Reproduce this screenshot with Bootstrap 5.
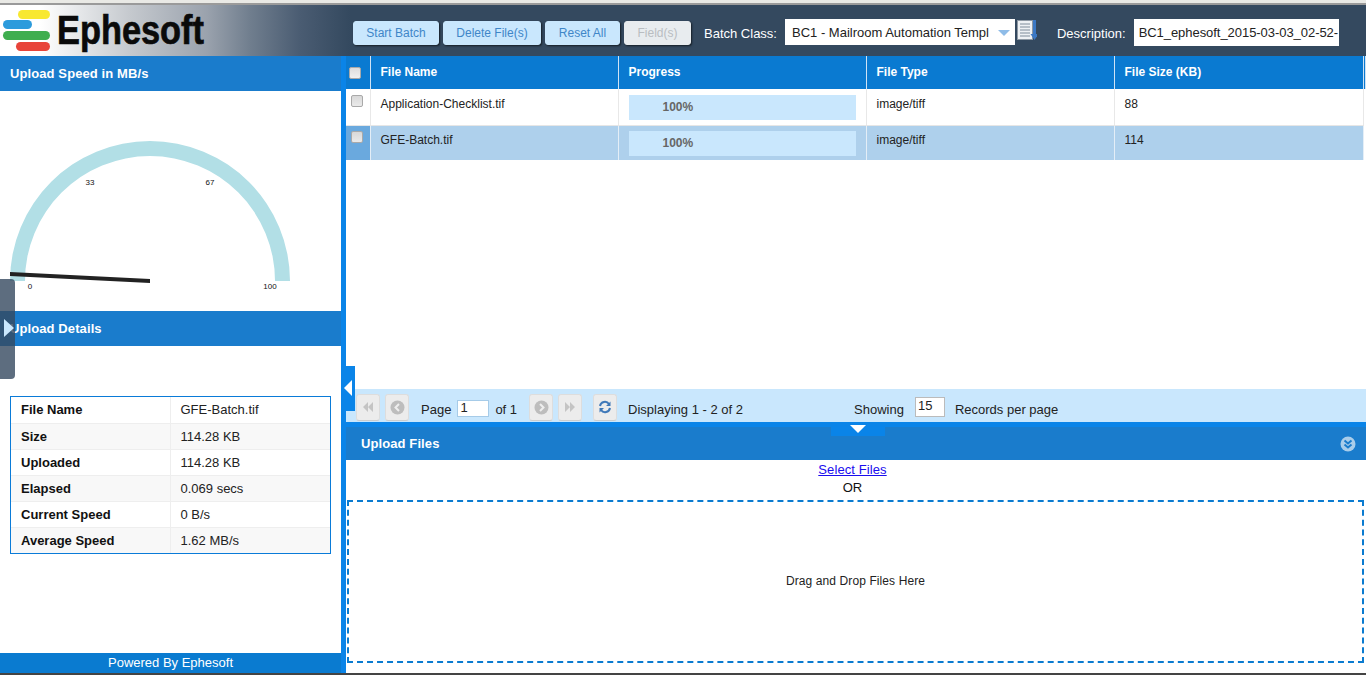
<!DOCTYPE html>
<html lang="en">
<head>
<meta charset="utf-8">
<title>Ephesoft Web Scanner</title>
<link href="https://cdn.jsdelivr.net/npm/bootstrap@5.3.0/dist/css/bootstrap.min.css" rel="stylesheet">
<style>
html,body{height:675px;overflow:hidden}
body{font-family:"Liberation Sans",Arial,sans-serif;font-size:12px;color:#111;background:#fff}
.shell{height:675px;position:relative}
.top-strip{height:5px;background:#e9e9e5;border-bottom:2px solid #9a9a9a}
.app-head{height:51px;background:linear-gradient(90deg,#fff 0,#fff 40px,#c5c9ce 130px,#9aa2ad 207px,#707e8e 250px,#4a5c72 300px,#34495f 350px)}
.logo-box{width:353px;flex:none}
.act-btn{--bs-btn-padding-y:0;--bs-btn-padding-x:0;--bs-btn-font-size:12px;--bs-btn-color:#3f86c8;--bs-btn-bg:#c9e7fd;--bs-btn-border-color:#c9e7fd;--bs-btn-hover-color:#3f86c8;--bs-btn-hover-bg:#c9e7fd;--bs-btn-border-radius:3px;--bs-btn-line-height:23px;--bs-btn-disabled-color:#b9bdc1;--bs-btn-disabled-bg:#e8ecef;--bs-btn-disabled-border-color:#e8ecef;--bs-btn-disabled-opacity:1;height:24px;box-shadow:1px 1px 2px rgba(0,0,0,.6)}
.act-row{margin-top:16px}
.w-start{width:86px}.w-delete{width:98px}.w-reset{width:75px}.w-field{width:67px}
.head-label{color:#fff;font-size:13px;line-height:16px}
.label-batch{margin:21px 8px 0 13px}
.label-desc{margin:21px 8px 0 20px}
.batch-select{width:230px;height:26px;margin-top:14px;background:#fff;font-size:13px;line-height:27px;padding-left:7px;position:relative;white-space:nowrap;overflow:hidden;color:#222}
.batch-caret{position:absolute;right:5px;top:11px;width:0;height:0;border-left:6px solid transparent;border-right:6px solid transparent;border-top:6px solid #8fbce8}
.list-icon{margin:15px 0 0 2px;flex:none}
.desc-box{width:205px;height:27px;margin-top:14px;background:#fff;font-size:13px;letter-spacing:-.05px;line-height:27px;padding-left:5px;overflow:hidden;white-space:nowrap;color:#222}
.main-area{height:617px}
.left-pane{width:341px;flex:none;height:617px}
.splitter{width:5px;flex:none;background:#0a84e8}
.right-pane{width:1020px;flex:none;height:617px}
.pane-title{height:35px;line-height:35px;padding-left:10px;background:#1a7ccc;color:#fff;font-size:13px;letter-spacing:.1px;font-weight:700}
.gauge-box{height:220px}
.gauge-box svg{display:block}
.gauge-num{font-size:8px;font-family:"Liberation Sans",Arial,sans-serif;fill:#111}
.details-wrap{height:307px;padding:50px 10px 0}
.details{width:321px;border:1px solid #0a7bd8;height:158px}
.details .table{--bs-table-border-color:#eee;font-size:13px;margin:0;table-layout:fixed}
.details .table td{height:26px;padding:0 0 0 10px;line-height:25px;color:#222}
.details .table th{width:159px;height:26px;padding:0 0 0 10px;line-height:25px;color:#111;font-weight:700;border-right:1px solid #eee}
.details .table tr:nth-child(even)>*{background:#f8f8f8}
.details .table tr:last-child>*{border-bottom:0}
.foot-bar{height:20px;background:#0a7bd0;color:#fff;font-size:13px;line-height:20px;text-align:center}
.base-line{height:2px;background:#444;position:absolute;left:0;right:0;bottom:0}
.grid-area{height:333px}
.files{table-layout:fixed;margin:0;font-size:12px;--bs-table-border-color:#e8e8e8}
.files th{height:33px;padding:0 0 2px 10px;background:#0a7ad1;color:#fff;font-weight:700;border-right:1px solid #cfe3f5;border-bottom:0;vertical-align:middle;line-height:28px}
.files th:first-child{padding:0}
.files td{height:36px;padding:8px 0 0 10px;line-height:14px;border-right:1px solid #e8e8e8;border-bottom:1px solid #e6e6e6;color:#222;vertical-align:top}
.files td:first-child{padding:6px 0 0 5px}
.files td.cell-prog{padding:6px 10px 0 10px}
.files .row-picked td{background:#aed0ec;border-right-color:#e4eef7;border-bottom:0;padding-top:7px;height:35px}
.files .row-picked td:first-child{background:#6aa9de;padding-top:5px}
.files .row-picked td.cell-prog{padding-top:5px}
.c1{width:24px}.c2{width:248px}.c3{width:248px}.c4{width:248px}.c5{width:249px}
.fake-check{display:block;width:12px;height:12px;background:linear-gradient(#d8d8d8,#eaeaea);border:1px solid #a9a9a9;border-radius:2px}
.head-check{margin-left:3px;background:linear-gradient(#ddd,#f0f0f0)}
.prog-fill{height:25px;width:227px;background:#c9e7fd;font-weight:700;color:#666;padding-left:34px;line-height:24px}
.pager{height:33px;background:#c9e7fd;padding-left:10px;font-size:13px;color:#222}
.pg-text{padding-top:8px;line-height:16px}
.pg-btn{width:24px;height:27px;flex:none;background:#ececec;border:1px solid #ddd;border-bottom-color:#ccc;border-radius:3px;margin-top:3px;display:flex;align-items:center;justify-content:center}
.pg-num{height:17px;background:#fff;border:1px solid #a6cbe8;font-size:13px;line-height:13px;padding-left:2px;margin:6px 6px 0 6px;width:32px}
.pg-size{height:20px;width:30px;background:#fff;border:1px solid #bbb;font-size:13px;line-height:15px;padding-left:2px;margin:3px 10px 0 11px}
.gap-5px{margin-left:5px}.gap-12px{margin-left:12px}.gap-11px{margin-left:11px}
.display-info{margin-left:11px;width:226px}
.blue-rule{height:5px;background:#0a84e8}
.upload-bar{height:33px;line-height:33px;background:#1a7ccc;color:#fff;font-weight:700;font-size:13px;letter-spacing:.1px;padding-left:15px;padding-right:10px}
.upload-body{height:213px;padding:0 2px 0 1px}
.pick-link{display:block;text-align:center;font-size:13px;letter-spacing:.1px;line-height:16px;padding:2px 6px 0 0;color:#1a0dee;height:18px}
.or-text{text-align:center;font-size:13px;line-height:18px;height:18px;padding:1px 6px 0 0}
.drop-zone{margin-top:4px;height:163px;border:2px dashed #0a7bd0;padding-bottom:1px;font-size:12px;letter-spacing:.1px;color:#222}
.side-tab{position:absolute;left:0;top:279px;width:15px;height:100px;background:rgba(52,73,95,.8);border-radius:0 4px 4px 0}
.side-arrow{position:absolute;left:4px;top:40px;width:0;height:0;border-top:9px solid transparent;border-bottom:9px solid transparent;border-left:10px solid #c9e7fd}
.collapse-tab{position:absolute;left:346px;top:366px;width:9px;height:45px;background:#0a84e8}
.collapse-arrow{position:absolute;left:-2px;top:14px;width:0;height:0;border-top:8px solid transparent;border-bottom:8px solid transparent;border-right:8px solid #fff}
.down-tab{position:absolute;left:831px;top:422px;width:54px;height:14px;background:#0a84e8}
.down-arrow{position:absolute;left:19px;top:3px;width:0;height:0;border-left:8px solid transparent;border-right:8px solid transparent;border-top:8px solid #fff}
</style>
</head>
<body>
<div class="shell">
  <div class="top-strip"></div>
  <header class="app-head d-flex align-items-start">
    <div class="logo-box">
      <svg width="250" height="51" viewBox="0 0 250 51" role="img" aria-label="Ephesoft logo">
        <rect x="18" y="5" width="32" height="9" rx="4.5" fill="#f8e830"/>
        <rect x="3" y="15" width="29" height="9" rx="4.5" fill="#2c9bdc"/>
        <rect x="3" y="26" width="47" height="9" rx="4.5" fill="#3fae4f"/>
        <rect x="16" y="37" width="34" height="9" rx="4.5" fill="#e8443a"/>
        <text x="57" y="39" font-family="Liberation Sans, Arial, sans-serif" font-weight="700" font-size="41" textLength="147" lengthAdjust="spacingAndGlyphs" stroke="#0a0a0a" stroke-width=".7" fill="#0a0a0a">Ephesoft</text>
      </svg>
    </div>
    <div class="d-flex gap-1 act-row">
      <button type="button" class="btn act-btn w-start">Start Batch</button>
      <button type="button" class="btn act-btn w-delete">Delete File(s)</button>
      <button type="button" class="btn act-btn w-reset">Reset All</button>
      <button type="button" class="btn act-btn w-field" disabled>Field(s)</button>
    </div>
    <span class="head-label label-batch">Batch Class:</span>
    <div class="batch-select">BC1 - Mailroom Automation Templ<span class="batch-caret"></span></div>
    <svg class="list-icon" width="20" height="21" viewBox="0 0 20 21" aria-hidden="true">
      <rect x=".5" y=".5" width="15" height="19" fill="#eef1f4" stroke="#8d98a3"/>
      <path d="M3 4h10M3 7h10M3 10h10M3 13h10M3 16h10" stroke="#7f8c9a"/>
      <path d="M16 0h3v15h-3z" fill="#3b78c4"/>
      <path d="M13.500 14h8l-4 6z" fill="#3b78c4"/>
    </svg>
    <span class="head-label label-desc">Description:</span>
    <div class="desc-box">BC1_ephesoft_2015-03-03_02-52-</div>
  </header>

  <main class="main-area d-flex">
    <section class="left-pane d-flex flex-column">
      <div class="pane-title">Upload Speed in MB/s</div>
      <div class="gauge-box">
        <svg width="341" height="220" viewBox="0 91 341 220" aria-label="Speed gauge">
          <path d="M10 281A140 140 0 0 1 290 281H275A125 125 0 0 0 25 281Z" fill="#b2dfe6"/>
          <text class="gauge-num" x="90" y="184.500" text-anchor="middle">33</text>
          <text class="gauge-num" x="210" y="184.500" text-anchor="middle">67</text>
          <text class="gauge-num" x="30" y="288.500" text-anchor="middle">0</text>
          <text class="gauge-num" x="270" y="288.500" text-anchor="middle">100</text>
          <path d="M10 272L150 279V283L10 276Z" fill="#222"/>
        </svg>
      </div>
      <div class="pane-title">Upload Details</div>
      <div class="details-wrap">
        <div class="details">
          <table class="table">
            <tbody>
              <tr><th scope="row">File Name</th><td>GFE-Batch.tif</td></tr>
              <tr><th scope="row">Size</th><td>114.28 KB</td></tr>
              <tr><th scope="row">Uploaded</th><td>114.28 KB</td></tr>
              <tr><th scope="row">Elapsed</th><td>0.069 secs</td></tr>
              <tr><th scope="row">Current Speed</th><td>0 B/s</td></tr>
              <tr><th scope="row">Average Speed</th><td>1.62 MB/s</td></tr>
            </tbody>
          </table>
        </div>
      </div>
      <div class="foot-bar">Powered By Ephesoft</div>
    </section>
    <div class="splitter"></div>
    <section class="right-pane d-flex flex-column">
      <div class="grid-area">
        <table class="table files">
          <colgroup><col class="c1"><col class="c2"><col class="c3"><col class="c4"><col class="c5"><col></colgroup>
          <thead>
            <tr><th><span class="fake-check head-check"></span></th><th>File Name</th><th>Progress</th><th>File Type</th><th>File Size (KB)</th><th></th></tr>
          </thead>
          <tbody>
            <tr><td><span class="fake-check"></span></td><td>Application-Checklist.tif</td><td class="cell-prog"><div class="prog-fill">100%</div></td><td>image/tiff</td><td>88</td><td class="border-0"></td></tr>
            <tr class="row-picked"><td><span class="fake-check"></span></td><td>GFE-Batch.tif</td><td class="cell-prog"><div class="prog-fill">100%</div></td><td>image/tiff</td><td>114</td><td class="border-0 bg-white"></td></tr>
          </tbody>
        </table>
      </div>
      <div class="pager d-flex align-items-center">
        <span class="pg-btn"><svg width="14" height="14" viewBox="0 0 14 14"><path d="M7 2 2 7l5 5zM12 2 7 7l5 5z" fill="#c4c4c4"/></svg></span>
        <span class="pg-btn gap-5px"><svg width="15" height="15" viewBox="0 0 15 15"><circle cx="7.500" cy="7.500" r="7" fill="#bdbdbd"/><path d="M9 4 5.500 7.500 9 11" fill="none" stroke="#eee" stroke-width="2"/></svg></span>
        <span class="pg-text gap-12px">Page</span>
        <span class="pg-num">1</span>
        <span class="pg-text">of 1</span>
        <span class="pg-btn gap-12px"><svg width="15" height="15" viewBox="0 0 15 15"><circle cx="7.500" cy="7.500" r="7" fill="#bdbdbd"/><path d="M6 4l3.500 3.500L6 11" fill="none" stroke="#eee" stroke-width="2"/></svg></span>
        <span class="pg-btn gap-5px"><svg width="14" height="14" viewBox="0 0 14 14"><path d="M2 2l5 5-5 5zM7 2l5 5-5 5z" fill="#c4c4c4"/></svg></span>
        <span class="pg-btn gap-11px"><svg width="14" height="14" viewBox="0 0 14 14"><path d="M2 6a5 5 0 0 1 9-2M12 8a5 5 0 0 1-9 2" fill="none" stroke="#3f78b8" stroke-width="2"/><path d="M12.500 1.500V6H8zM1.500 12.500V8H6z" fill="#3f78b8"/></svg></span>
        <span class="pg-text display-info">Displaying 1 - 2 of 2</span>
        <span class="pg-text">Showing</span>
        <span class="pg-size">15</span>
        <span class="pg-text">Records per page</span>
      </div>
      <div class="blue-rule"></div>
      <div class="upload-bar d-flex justify-content-between align-items-center">
        <span>Upload Files</span>
        <svg width="16" height="16" viewBox="0 0 16 16" aria-hidden="true"><circle cx="8" cy="8" r="7.500" fill="#a9cdea"/><path d="M4.500 4.500 8 7.500l3.500-3M4.500 8.500 8 11.500l3.500-3" fill="none" stroke="#1a7ccc" stroke-width="2"/></svg>
      </div>
      <div class="upload-body">
        <a href="#" class="pick-link">Select Files</a>
        <div class="or-text">OR</div>
        <div class="drop-zone d-flex align-items-center justify-content-center">Drag and Drop Files Here</div>
      </div>
    </section>
  </main>
  <div class="side-tab"><span class="side-arrow"></span></div>
  <div class="collapse-tab"><span class="collapse-arrow"></span></div>
  <div class="down-tab"><span class="down-arrow"></span></div>
  <div class="base-line"></div>
</div>
<script src="https://cdn.jsdelivr.net/npm/bootstrap@5.3.0/dist/js/bootstrap.bundle.min.js"></script>
</body>
</html>
